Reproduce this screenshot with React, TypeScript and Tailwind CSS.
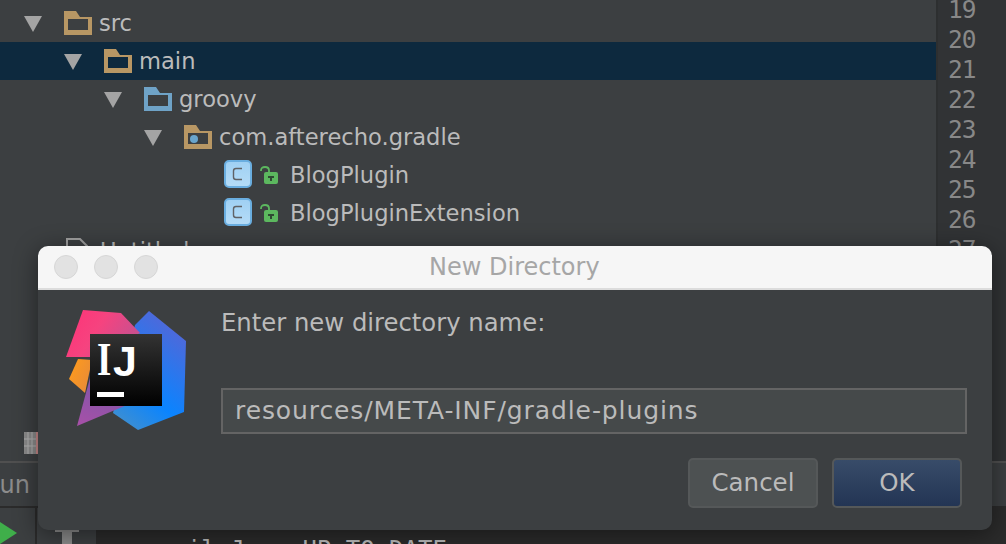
const treeFont = { fontFamily: '"DejaVu Sans", sans-serif' };
const monoFont = { fontFamily: '"DejaVu Sans Mono", monospace' };

function Folder({ color, dot }: { color: string; dot?: boolean }) {
  return (
    <svg width="28" height="24" viewBox="0 0 28 24" className="shrink-0">
      {/* interior is cut out so the row colour shows through */}
      <path d="M0 0H12L16 6H28V24H0ZM4 8V19H24V8Z" fill={color} fillRule="evenodd" />
      {dot && <circle cx="10" cy="14" r="4" fill="#6aa5cc" />}
    </svg>
  );
}

function Arrow() {
  return (
    <svg width="18" height="16" viewBox="0 0 18 16" className="mt-[2px] shrink-0">
      <path d="M0 0H18L9 16Z" fill="#a4a4a4" />
    </svg>
  );
}

function ClassIcon() {
  return (
    <svg width="28" height="28" viewBox="0 0 28 28" className="-mt-[2px] shrink-0">
      <defs>
        <linearGradient id="cls" x1="0" y1="0" x2="0" y2="1">
          <stop offset="0" stopColor="#9fd0f3" />
          <stop offset="1" stopColor="#b5dcf7" />
        </linearGradient>
      </defs>
      <rect x="1" y="1" width="26" height="26" rx="4" fill="url(#cls)" stroke="#6aaee0" strokeWidth="2" />
      <path d="M18 8.5H12Q9.5 8.5 9.5 11V17Q9.5 19.5 12 19.5H18" fill="none" stroke="#606266" strokeWidth="1.4" />
    </svg>
  );
}

function Lock() {
  return (
    <svg width="18" height="18" viewBox="0 0 18 18" className="shrink-0">
      <path d="M1 5V4.5Q1 1 5 1Q9 1 9 4.5V7" fill="none" stroke="#5cb85f" strokeWidth="1.8" />
      <rect x="4" y="6" width="14" height="12" rx="2" fill="#5cb85f" />
      <path d="M8 10H14V12H12V15H10V12H8Z" fill="#2f4a33" />
    </svg>
  );
}

function Row({ indent, selected, children }: { indent: string; selected?: boolean; children: React.ReactNode }) {
  return (
    <div className={`flex h-[38px] shrink-0 items-center ${indent} ${selected ? "bg-[#0d293e]" : ""}`}>
      {children}
    </div>
  );
}

function Logo() {
  return (
    <div className="relative mt-[5px] h-[120px] w-[120px] shrink-0">
      <svg width="120" height="120" viewBox="0 0 120 120" className="absolute left-0 top-0">
        <defs>
          <linearGradient id="pink" x1="0" y1="0" x2="1" y2="0.4">
            <stop offset="0" stopColor="#fe3277" />
            <stop offset="0.5" stopColor="#f6437f" />
            <stop offset="1" stopColor="#c9508f" />
          </linearGradient>
          <linearGradient id="blue" x1="0.2" y1="1" x2="0.7" y2="0">
            <stop offset="0" stopColor="#3f8fd0" />
            <stop offset="0.35" stopColor="#0a84ff" />
            <stop offset="1" stopColor="#5566d6" />
          </linearGradient>
          <linearGradient id="purple" x1="0" y1="1" x2="0.4" y2="0">
            <stop offset="0" stopColor="#a850a8" />
            <stop offset="1" stopColor="#7f56a8" />
          </linearGradient>
          <linearGradient id="orange" x1="0" y1="0.2" x2="1" y2="0.8">
            <stop offset="0" stopColor="#ff9b1c" />
            <stop offset="1" stopColor="#e58a3a" />
          </linearGradient>
          <linearGradient id="black" x1="0" y1="0" x2="0" y2="1">
            <stop offset="0" stopColor="#333333" />
            <stop offset="1" stopColor="#000000" />
          </linearGradient>
        </defs>
        <path d="M83 1L120 31L118 102L72 120L47 103L69 15Z" fill="url(#blue)" />
        <path d="M12 49L3 69L19 83L26 50Z" fill="url(#orange)" />
        <path d="M11 116L24 68L61 95Z" fill="url(#purple)" />
        <path d="M17 0L55 3L74 23L24 47L0 47Z" fill="url(#pink)" />
        <rect x="24" y="24" width="72" height="72" fill="url(#black)" />
        <rect x="31" y="82" width="27" height="5" fill="#ffffff" />
      </svg>
      <span className="absolute left-[31px] top-[25px] origin-left scale-x-[.8] text-[46px] leading-[50px] font-bold text-white" style={{ fontFamily: '"Liberation Serif", serif' }}>
        I
      </span>
      <span className="absolute left-[47px] top-[26px] text-[43px] leading-[50px] font-bold text-white" style={{ fontFamily: '"Liberation Sans", sans-serif' }}>
        J
      </span>
    </div>
  );
}

export default function App() {
  return (
    <div className="relative h-[544px] w-[1006px] overflow-hidden bg-[#3c3f41] text-[24px] text-[#bbbbbb]" style={treeFont}>
      <div className="flex h-[461px] overflow-hidden">
        <div className="flex min-w-0 flex-1 flex-col pt-[4px] text-[22.6px]">
          <Row indent="pl-[24px]">
            <Arrow />
            <span className="ml-[22px]"><Folder color="#b89764" /></span>
            <span className="ml-[7px] pt-[2px]">src</span>
          </Row>
          <Row indent="pl-[64px]" selected>
            <Arrow />
            <span className="ml-[22px]"><Folder color="#b89764" /></span>
            <span className="ml-[7px] pt-[2px]">main</span>
          </Row>
          <Row indent="pl-[104px]">
            <Arrow />
            <span className="ml-[22px]"><Folder color="#6fa3c7" /></span>
            <span className="ml-[7px] pt-[2px]">groovy</span>
          </Row>
          <Row indent="pl-[144px]">
            <Arrow />
            <span className="ml-[22px]"><Folder color="#b89764" dot /></span>
            <span className="ml-[7px] pt-[2px]">com.afterecho.gradle</span>
          </Row>
          <Row indent="pl-[224px]">
            <ClassIcon />
            <span className="ml-[8px]"><Lock /></span>
            <span className="ml-[12px] pt-[2px]">BlogPlugin</span>
          </Row>
          <Row indent="pl-[224px]">
            <ClassIcon />
            <span className="ml-[8px]"><Lock /></span>
            <span className="ml-[12px] pt-[2px]">BlogPluginExtension</span>
          </Row>
          <Row indent="pl-[66px]">
            <svg width="22" height="26" viewBox="0 0 22 26" className="shrink-0">
              <path d="M1 1H14L21 8V25H1Z" fill="none" stroke="#a0a0a0" strokeWidth="2" />
            </svg>
            <span className="ml-[12px] pt-[2px]">Untitled</span>
          </Row>
          <div className="mt-auto mb-[7px] flex h-[22px] items-center pl-[24px]">
            <svg width="14" height="22" viewBox="0 0 14 22">
              <rect width="12" height="22" fill="#8a8a8a" />
              <path d="M4 0V22M8 0V22M0 7H12M0 14H12" stroke="#b0b0b0" strokeWidth="1" />
              <rect x="12" width="2" height="22" fill="#c98a8a" />
            </svg>
          </div>
        </div>
        <div className="w-[70px] shrink-0 border-l-2 border-[#2d2f30] bg-[#313335] pl-[10px] text-[24.5px] leading-[30px] font-medium tracking-[-1px] text-[#888888]" style={monoFont}>
          <div className="-mt-[5px]">
            {[19, 20, 21, 22, 23, 24, 25, 26, 27].map((n) => (
              <div key={n} className="h-[30px]">{n}</div>
            ))}
          </div>
        </div>
      </div>
      <div className="flex h-[47px] items-center overflow-hidden border-t-2 border-b-2 border-t-[#505050] border-b-[#2b2b2b] bg-[#3c3f41] text-[#8c8c8c]">
        <span className="-ml-[16px]">Run</span>
      </div>
      <div className="flex h-[36px] bg-[#2b2b2b]">
        <div className="flex w-[37px] shrink-0 border-r-2 border-[#2b2b2b] bg-[#3c3f41] pt-[14px]">
          <svg width="18" height="22" viewBox="0 0 18 22" className="shrink-0">
            <path d="M0 0L17 11L0 22Z" fill="#3fae4a" />
          </svg>
        </div>
        <div className="flex w-[59px] shrink-0 bg-[#3c3f41] pl-[18px] pt-[21px]">
          <svg width="24" height="15" viewBox="0 0 24 15">
            <path d="M0 0H24V3H17V15H7V3H0Z" fill="#8a8a8a" />
          </svg>
        </div>
        <div className="pl-[33px] pt-[24px] text-[#bbbbbb]" style={monoFont}>compileJava UP-TO-DATE</div>
      </div>

      {/* Dialog */}
      <div className="absolute left-[38px] top-[246px] flex h-[284px] w-[954px] flex-col overflow-hidden rounded-[10px] bg-[#3c3f41] shadow-[0_4px_24px_rgba(0,0,0,0.45)]">
        <div className="flex h-[44px] shrink-0 items-center border-b-2 border-[#dcdcdc] bg-[#f6f6f6] pl-[16px]">
          <div className="flex gap-[16px]">
            <div className="h-[24px] w-[24px] rounded-full border border-[#d6d6d6] bg-[#e2e2e2]" />
            <div className="h-[24px] w-[24px] rounded-full border border-[#d6d6d6] bg-[#e2e2e2]" />
            <div className="h-[24px] w-[24px] rounded-full border border-[#d6d6d6] bg-[#e2e2e2]" />
          </div>
          <div className="ml-[271px] text-[#a6a6a6]">New Directory</div>
        </div>
        <div className="flex flex-1 pl-[28px] pt-[15px]">
          <Logo />
          <div className="ml-[35px] flex-1 pr-[25px]">
            <div className="h-[36px] text-[24.3px] text-[#bbbbbb]">Enter new directory name:</div>
            <div className="mt-[47px] flex h-[46px] items-center border-2 border-[#646464] bg-[#45494a] pl-[12px] text-[25px] tracking-[0.9px]">resources/META-INF/gradle-plugins</div>
            <div className="mt-[24px] flex justify-end gap-[14px] pr-[5px]">
              <button className="h-[50px] w-[130px] rounded-[5px] border-2 border-[#555859] bg-[#4d5152] text-[24.5px] text-[#bbbbbb]">Cancel</button>
              <button className="h-[50px] w-[130px] rounded-[5px] border-2 border-[#555859] bg-gradient-to-b from-[#384c69] to-[#233554] text-[24.5px] text-[#bbbbbb]">OK</button>
            </div>
          </div>
        </div>
      </div>
    </div>
  );
}
